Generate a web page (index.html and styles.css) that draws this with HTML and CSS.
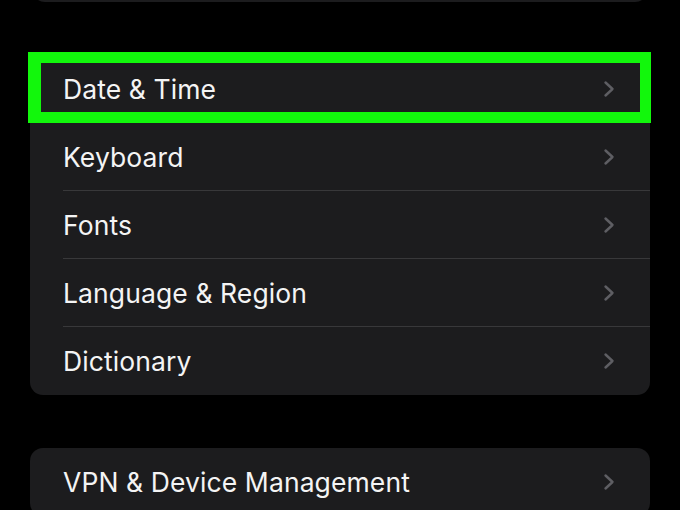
FILE: index.html
```html
<html>
    <head>
        <title>General</title>
        <link rel="stylesheet" href="styles.css">
    </head>
    <body>
        <div class="list">
            <div class="group group-prev"></div>

            <div class="group">
                <div class="row highlighted">
                    <div class="row-inner">
                        <span class="label">Date &amp; Time</span>
                        <svg class="chevron" viewBox="0 0 12 18"><path d="M2.5 2.5 L9.5 9 L2.5 15.5" /></svg>
                    </div>
                </div>
                <div class="row">
                    <div class="row-inner">
                        <span class="label">Keyboard</span>
                        <svg class="chevron" viewBox="0 0 12 18"><path d="M2.5 2.5 L9.5 9 L2.5 15.5" /></svg>
                    </div>
                </div>
                <div class="row">
                    <div class="row-inner">
                        <span class="label">Fonts</span>
                        <svg class="chevron" viewBox="0 0 12 18"><path d="M2.5 2.5 L9.5 9 L2.5 15.5" /></svg>
                    </div>
                </div>
                <div class="row">
                    <div class="row-inner">
                        <span class="label">Language &amp; Region</span>
                        <svg class="chevron" viewBox="0 0 12 18"><path d="M2.5 2.5 L9.5 9 L2.5 15.5" /></svg>
                    </div>
                </div>
                <div class="row">
                    <div class="row-inner">
                        <span class="label">Dictionary</span>
                        <svg class="chevron" viewBox="0 0 12 18"><path d="M2.5 2.5 L9.5 9 L2.5 15.5" /></svg>
                    </div>
                </div>
            </div>

            <div class="group">
                <div class="row">
                    <div class="row-inner">
                        <span class="label">VPN &amp; Device Management</span>
                        <svg class="chevron" viewBox="0 0 12 18"><path d="M2.5 2.5 L9.5 9 L2.5 15.5" /></svg>
                    </div>
                </div>
            </div>
        </div>
    </body>
</html>
```

FILE: styles.css
```css
* {
    box-sizing: border-box;
}
html,
body {
    margin: 0;
    background-color: #000;
    overflow: hidden;
}
body {
    font-family: Inter, "Noto Sans", sans-serif;
    color: #f4f4f4;
    height: 510px;
}
.list {
    display: flex;
    flex-direction: column;
    gap: 53px;
    padding: 0 30px;
}
.group {
    background-color: #1c1c1e;
    border-radius: 13px;
}
.group-prev {
    height: 40px;
    margin-top: -38px;
    margin-left: 2px;
    margin-right: 2px;
}
.row {
    position: relative;
    padding-left: 33px;
}
.row-inner {
    display: flex;
    align-items: center;
    justify-content: space-between;
    height: 68px;
    padding-right: 35px;
    border-bottom: 1px solid #38383a;
}
.row:last-child .row-inner {
    border-bottom: none;
}
.label {
    font-size: 26.5px;
    letter-spacing: 0.1px;
}
.chevron {
    width: 12px;
    height: 18px;
}
.chevron path {
    fill: none;
    stroke: #5e5e63;
    stroke-width: 2.4;
    stroke-linecap: round;
    stroke-linejoin: round;
}
/* annotation box drawn over the first row */
.highlighted::after {
    content: "";
    position: absolute;
    top: -3px;
    left: -2px;
    right: -1px;
    bottom: 0;
    border: 11px solid #12f70c;
    border-left-width: 13px;
}
```
